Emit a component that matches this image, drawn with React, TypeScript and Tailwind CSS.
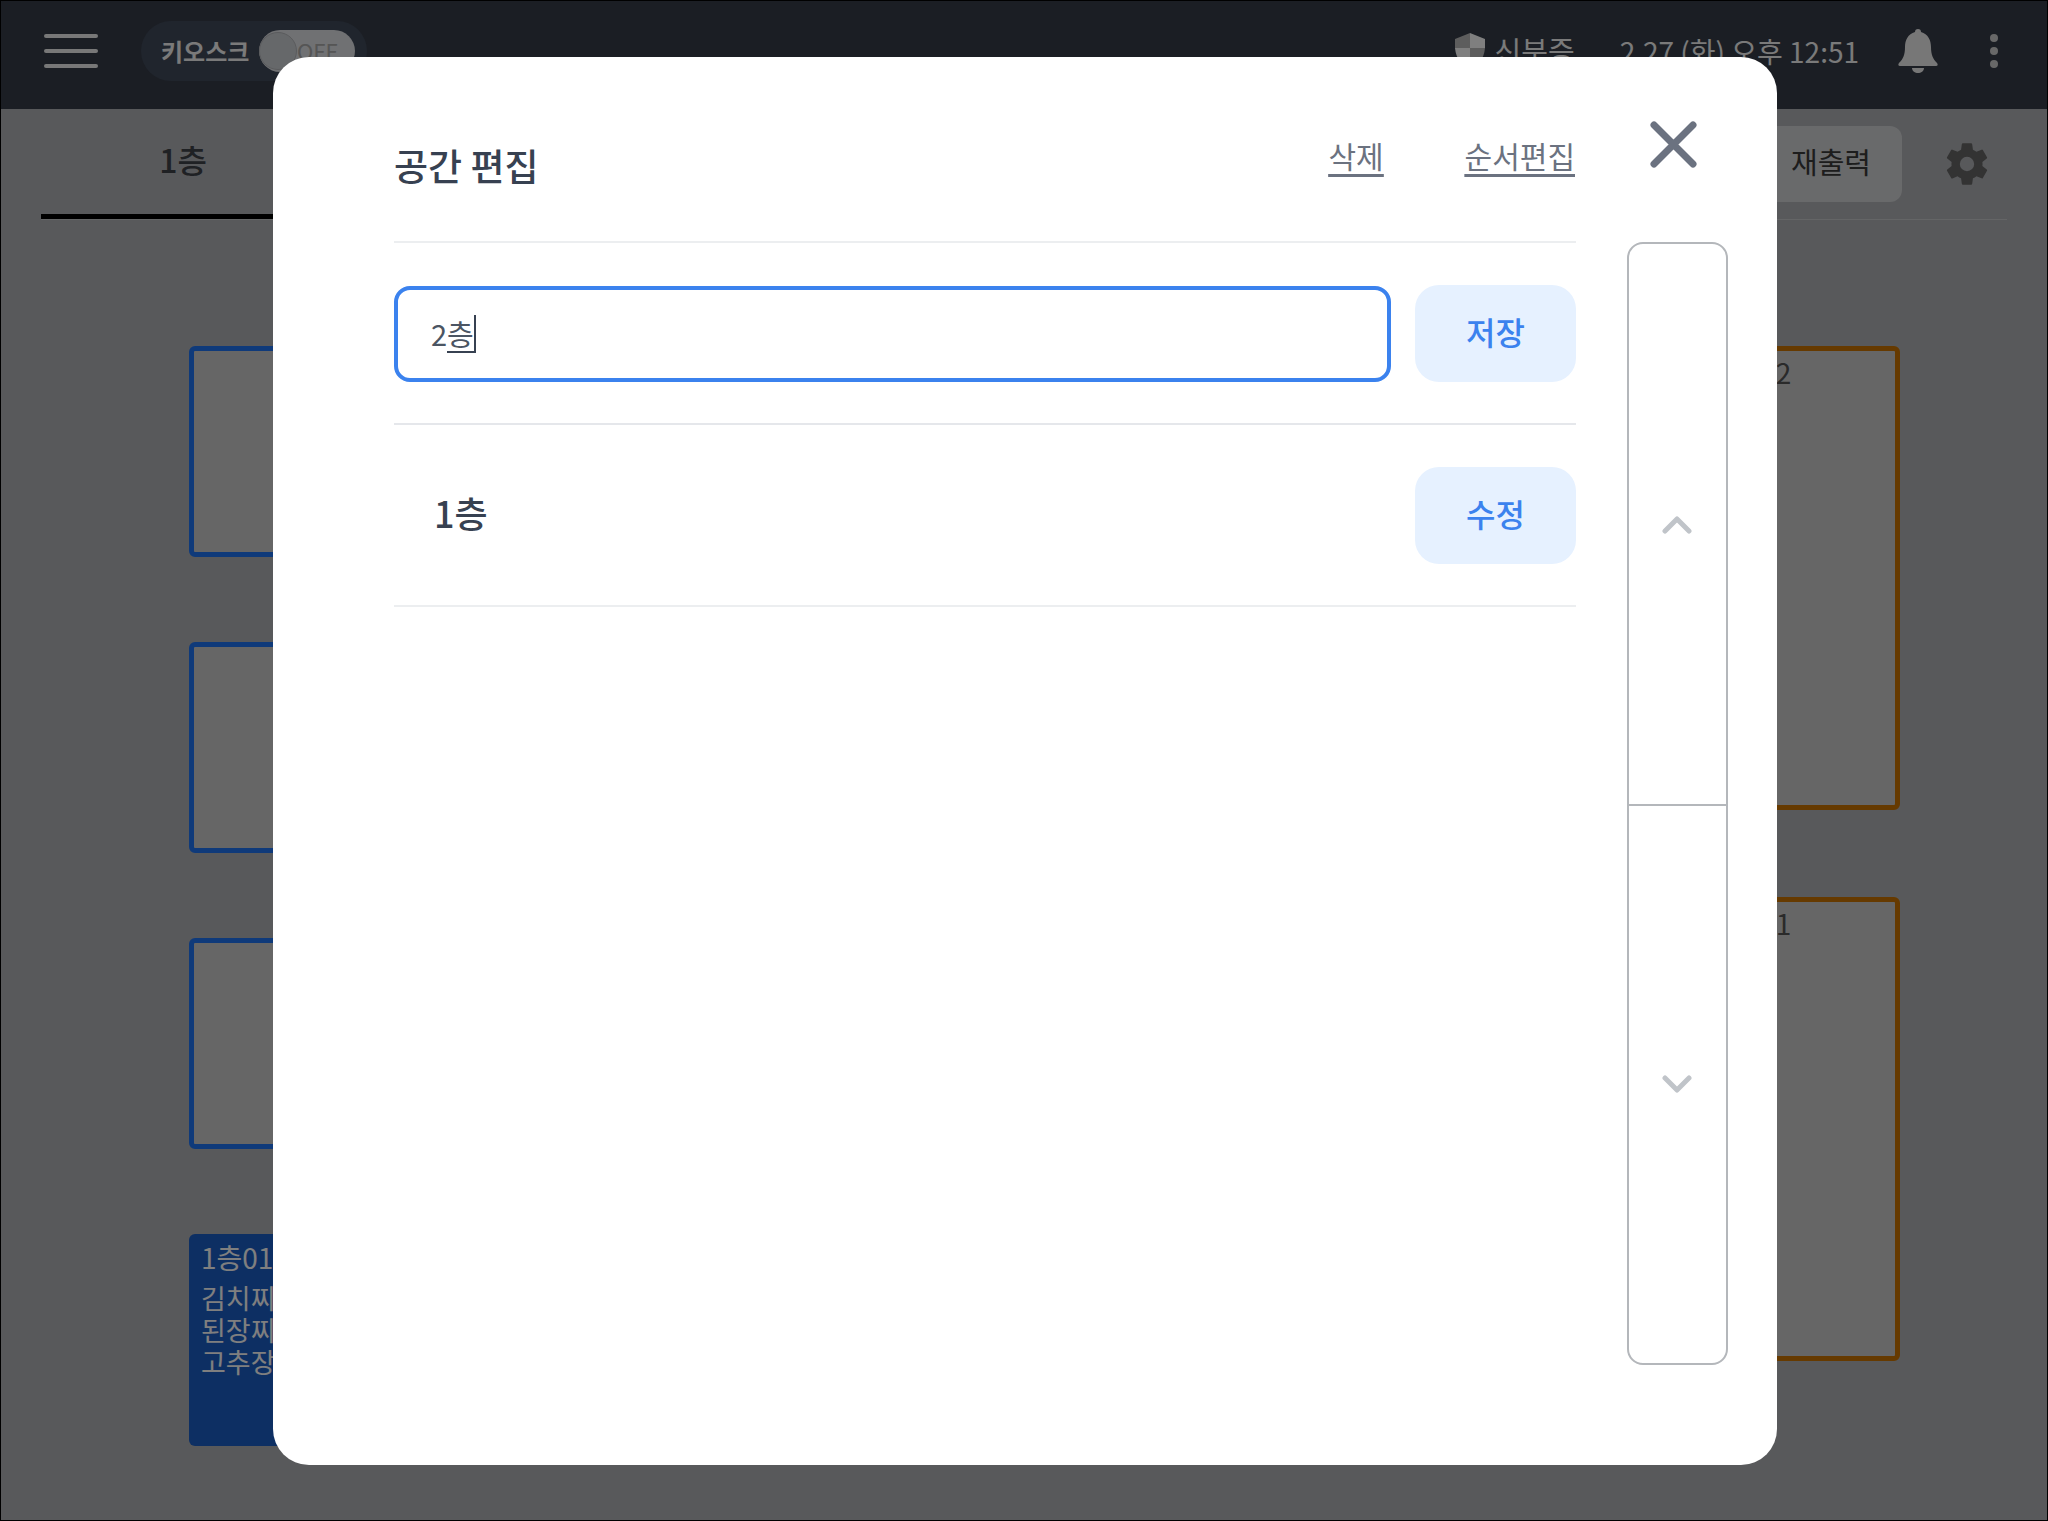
import React from "react";
import { IoSettingsSharp } from "react-icons/io5";

const font = "font-['Noto_Sans_CJK_KR',sans-serif]";

const MiniCard = () => (
  <div className="h-[211px] rounded-md border-[5px] border-[#1e74f4] bg-[#cccccc]" />
);

const TallCard = ({ label }: { label: string }) => (
  <div className="h-[464px] rounded-md border-[5px] border-[#cc7400] bg-[#cccccc] pl-3 text-[28px] text-[#555]">
    {label}
  </div>
);

const FilledCard = () => (
  <div className="h-[212px] rounded-md bg-[#1a5ec6] px-[12px] pt-[5px] text-[27px] leading-[32px] text-white">
    <p className="mb-[7px] text-[28px] leading-[36px]">1층01</p>
    <p>김치찌개</p>
    <p>된장찌개</p>
    <p>고추장</p>
  </div>
);

const BlueButton = ({ label }: { label: string }) => (
  <button className="h-[97px] w-[161px] shrink-0 rounded-[24px] bg-[#e6f1ff] pb-[5px] text-[32px] font-medium text-[#3b82ee]">
    {label}
  </button>
);

const TopBar = () => (
  <header className="flex h-[108px] items-center bg-[#363c48] pb-[9px] pl-[43px] pr-[49px] text-[#f4f4f4]">
    <div className="flex w-[54px] flex-col gap-[11px]">
      <span className="h-[4px] rounded-full bg-[#f0f0f0]" />
      <span className="h-[4px] rounded-full bg-[#f0f0f0]" />
      <span className="h-[4px] rounded-full bg-[#f0f0f0]" />
    </div>
    <div className="ml-[43px] flex h-[60px] w-[226px] items-center rounded-full bg-[#404a5a] pl-[20px]">
      <span className="w-[98px] text-[24px] font-bold">키오스크</span>
      <div className="flex h-[42px] w-[96px] items-center rounded-full bg-[#e0e2e6]">
        <span className="size-[38px] shrink-0 rounded-full border border-[#b5b7bb] bg-[#cdd0d4]" />
        <span className="text-[22px] text-[#aaa]">OFF</span>
      </div>
    </div>
    <svg viewBox="0 0 30 36" className="ml-auto h-[36px] w-[30px]">
      <path d="M15 0 30 6v9H15z" fill="#ffffff" />
      <path d="M15 0 0 6v9h15z" fill="#bbbbbb" />
      <path d="M0 15h15v21C7 33 1 26 0 15z" fill="#ffffff" />
      <path d="M30 15H15v21c8-3 14-10 15-21z" fill="#bbbbbb" />
    </svg>
    <span className="ml-[10px] text-[29px]">신분증</span>
    <span className="ml-[45px] text-[28px]">2.27 (화) 오후 12:51</span>
    <svg viewBox="0 0 40 44" className="ml-[39px] h-[44px] w-[40px]">
      <path
        d="M20 0c2 0 3 1 3 3 7 2 10 8 10 15 0 8 2 12 6 16 1 1 1 3-1 3H2c-2 0-2-2-1-3 4-4 6-8 6-16C7 11 10 5 17 3c0-2 1-3 3-3z"
        fill="#eeeeee"
      />
      <path d="M14 39h12c0 3-3 5-6 5s-6-2-6-5z" fill="#eeeeee" />
    </svg>
    <div className="ml-[52px] flex flex-col gap-[5px]">
      <span className="size-[8px] rounded-full bg-[#d0d0d0]" />
      <span className="size-[8px] rounded-full bg-[#d0d0d0]" />
      <span className="size-[8px] rounded-full bg-[#d0d0d0]" />
    </div>
  </header>
);

const Floor = () => (
  <div className="flex-1">
    <div className="mx-[40px] flex h-[111px] items-center justify-between border-b border-[#c8cacd]">
      <div className="flex h-full w-[400px] items-center justify-center self-stretch border-b-[5px] border-black pb-[6px] pr-[116px] text-[32px] font-medium text-[#3e4249]">
        1층
      </div>
      <div className="flex items-center gap-[42px] pr-[17px]">
        <button className="h-[76px] rounded-xl bg-[#d2d4d6] pb-[4px] pl-[33px] pr-[31px] text-[29px] text-[#3a3a3a]">
          재출력
        </button>
        <IoSettingsSharp className="size-[46px] text-[#666]" />
      </div>
    </div>
    <div className="mt-[126px] flex justify-between pl-[188px] pr-[147px]">
      <div className="flex w-[198px] flex-col gap-[85px]">
        <MiniCard />
        <MiniCard />
        <MiniCard />
        <FilledCard />
      </div>
      <div className="flex w-[198px] flex-col gap-[87px]">
        <TallCard label="1층12" />
        <TallCard label="1층11" />
      </div>
    </div>
  </div>
);

const SpaceEditModal = () => (
  <div className="relative flex h-[1408px] w-[1504px] rounded-[36px] bg-white">
    <div className="ml-[121px] w-[1182px]">
      <div className="flex h-[186px] items-start justify-between border-b-2 border-[#eceef0]">
        <h2 className="mt-[81px] text-[37px] leading-[54px] font-medium text-[#374151]">
          공간 편집
        </h2>
        <div className="mt-[76px] flex gap-[81px] pr-[1px] text-[30px] leading-[44px] text-[#6b7280] underline underline-offset-[6px]">
          <a>삭제</a>
          <a>순서편집</a>
        </div>
      </div>
      <div className="flex h-[182px] items-center justify-between border-b-2 border-[#e5e7eb] pt-[1px]">
        <div className="flex h-[96px] w-[997px] items-center rounded-[16px] border-4 border-[#3b82ee] pl-[33px] text-[29px] text-[#4b5563]">
          2<span className="border-b-2 border-[#374151] leading-[36px]">층</span>
          <span className="h-[38px] w-[2px] bg-[#374151]" />
        </div>
        <BlueButton label="저장" />
      </div>
      <div className="flex h-[182px] items-center justify-between border-b-2 border-[#eceef0]">
        <span className="pb-[6px] pl-[40px] text-[36px] font-medium text-[#374151]">1층</span>
        <BlueButton label="수정" />
      </div>
    </div>
    <div className="ml-[51px] flex w-[101px] flex-col">
      <div className="flex h-[185px] items-start justify-center pr-[9px] pt-[64px]">
        <svg viewBox="0 0 47 47" className="size-[47px]">
          <path
            d="M4 4l39 39M43 4L4 43"
            fill="none"
            stroke="#6b7280"
            strokeWidth="7"
            strokeLinecap="round"
          />
        </svg>
      </div>
      <div className="flex h-[1123px] flex-col rounded-[16px] border-2 border-[#b4b7bb]">
        <div className="flex flex-1 items-center justify-center border-b-2 border-[#b4b7bb] pr-[2px] pt-[2px]">
          <svg viewBox="0 0 30 18" className="h-[18px] w-[30px]">
            <path
              d="M3 15 15 3l12 12"
              fill="none"
              stroke="#c0c4c9"
              strokeWidth="5"
              strokeLinecap="round"
              strokeLinejoin="round"
            />
          </svg>
        </div>
        <div className="flex flex-1 items-center justify-center pr-[2px]">
          <svg viewBox="0 0 30 18" className="h-[18px] w-[30px]">
            <path
              d="M3 3l12 12L27 3"
              fill="none"
              stroke="#c0c4c9"
              strokeWidth="5"
              strokeLinecap="round"
              strokeLinejoin="round"
            />
          </svg>
        </div>
      </div>
    </div>
  </div>
);

export default function App() {
  return (
    <div
      className={`relative flex h-[1521px] w-full flex-col overflow-hidden border border-black bg-[#b0b2b6] ${font}`}
    >
      <TopBar />
      <Floor />
      <div className="absolute inset-0 flex items-center justify-center bg-black/50 pl-[2px] pt-[1px]">
        <SpaceEditModal />
      </div>
    </div>
  );
}
